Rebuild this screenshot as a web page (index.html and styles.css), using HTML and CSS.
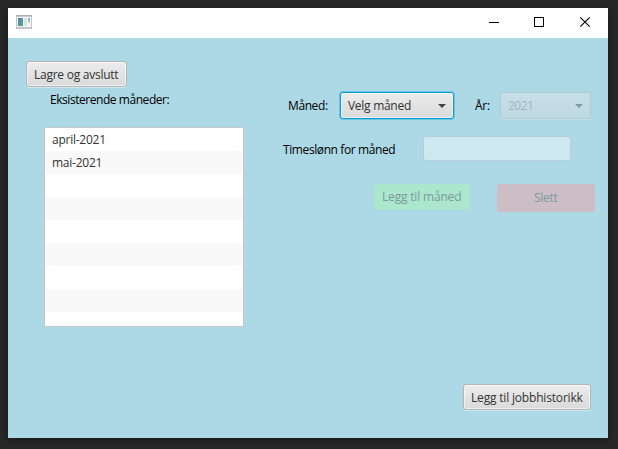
FILE: index.html
```html
<!DOCTYPE html>
<html lang="no">
<head>
<meta charset="utf-8">
<title>Måneder</title>
<link rel="stylesheet" href="styles.css">
</head>
<body>
<div class="window">
  <header class="titlebar">
    <svg class="app-icon" width="16" height="14" viewBox="0 0 16 14" shape-rendering="crispEdges">
      <defs><linearGradient id="g" x1="0" y1="0" x2="1" y2="1"><stop offset="0" stop-color="#4f83b5"/><stop offset="1" stop-color="#4fae78"/></linearGradient></defs>
      <rect width="16" height="14" fill="#c3c7ca"/>
      <rect width="16" height="1" fill="#a9b2bb"/>
      <rect x="1" y="2" width="14" height="10" fill="#f5f6f7"/>
      <rect x="2" y="3" width="5" height="8" fill="url(#g)"/>
      <rect x="8" y="3" width="3" height="8" fill="#e0e0e0"/>
      <rect x="12" y="3" width="2" height="3" fill="#8eb6d9"/>
      <rect x="12" y="6" width="2" height="2" fill="#b9e0ba"/>
    </svg>
    <svg class="controls" width="138" height="30" viewBox="0 0 138 30" fill="none" stroke="#000">
      <path d="M19 14.500h10M64.500 9.500h9v9h-9z" shape-rendering="crispEdges"/>
      <path d="M110.300 9.300l9.400 9.400M119.700 9.300l-9.400 9.400" stroke-width="1.100"/>
    </svg>
  </header>
  <main class="pane">
    <section class="existing">
      <button class="btn save"><span class="t-save">Lagre og avslutt</span></button>
      <div class="list-label"><span class="t-list">Eksisterende måneder:</span></div>
      <ul class="list">
        <li><span class="t-april">april-2021</span></li>
        <li><span class="t-mai">mai-2021</span></li>
        <li></li><li></li><li></li><li></li><li></li><li></li><li></li>
      </ul>
    </section>
    <section class="form">
      <div class="row period">
        <label class="month-label"><span class="t-month">Måned:</span></label>
        <div class="combo focused"><span class="t-choose">Velg måned</span><i class="arrow"></i></div>
        <label class="year-label"><span class="t-year">År:</span></label>
        <div class="combo disabled"><span class="t-2021">2021</span><i class="arrow"></i></div>
      </div>
      <div class="row wage">
        <label class="wage-label"><span class="t-wage">Timeslønn for måned</span></label>
        <div class="field"></div>
      </div>
      <div class="row actions">
        <button class="flat add" disabled><span class="t-add">Legg til måned</span></button>
        <button class="flat delete" disabled><span class="t-delete">Slett</span></button>
      </div>
      <button class="btn history"><span class="t-history">Legg til jobbhistorikk</span></button>
    </section>
  </main>
</div>
</body>
</html>
```
FILE: styles.css
```css
* { box-sizing: border-box; }
body {
  margin: 0;
  height: 449px;
  padding: 8px 10px 11px 8px;
  overflow: hidden;
  background: #282828;
  font: 12px/16px "Open Sans", "Noto Sans", sans-serif;
  color: #000;
}
.window { height: 430px; background: #add8e6; box-shadow: 0 2px 8px rgba(0,0,0,.4); }
.titlebar {
  display: flex;
  justify-content: space-between;
  height: 30px;
  padding-left: 8px;
  background: #fff;
}
.app-icon { margin-top: 7px; }
.pane { display: flex; height: 400px; }
.existing { width: 257px; padding: 23px 0 0 18px; }
.form { display: flex; flex-direction: column; flex: 1; padding-top: 54px; }
.row { display: flex; }
span { display: inline-block; white-space: nowrap; }

button { font: inherit; padding: 0; display: flex; align-items: center; }
.btn {
  height: 26px;
  padding: 1px 0 0 7px;
  border: 1px solid #b5b5b5;
  border-radius: 3px;
  background: linear-gradient(#ececec, #dadada);
  box-shadow: inset 0 0 0 1px rgba(255,255,255,.55), 0 1px 0 rgba(255,255,255,.4);
  color: #333;
}
.save { width: 101px; }
.list-label { height: 16px; margin: 5px 0 0 24px; }
.list {
  width: 200px;
  height: 200px;
  margin: 19px 0 0 18px;
  padding: 0;
  border: 1px solid #c4c8ca;
  background: #fff;
  overflow: hidden;
  list-style: none;
  color: #333;
}
.list li { height: 23px; padding: 4px 7px; }
.list li:nth-child(even) { background: #f9f9f9; }

.period { height: 27px; padding-left: 23px; }
.month-label { width: 52px; padding-top: 6px; }
.year-label { width: 46px; padding: 6px 0 0 21px; }
.combo {
  display: flex;
  align-items: center;
  justify-content: space-between;
  height: 27px;
  padding: 0 7px;
  border: 1px solid #b5b5b5;
  border-radius: 3px;
  background: linear-gradient(#ececec, #dadada);
  color: #333;
}
.focused {
  width: 114px;
  border-color: #039ed3;
  box-shadow: 0 0 0 1px rgba(3,158,211,.35), inset 0 0 0 1px rgba(255,255,255,.6);
}
.disabled { width: 91px; opacity: .4; box-shadow: 0 1px 0 rgba(255,255,255,.6); }
.disabled span { color: #858585; }
.arrow { border: 4px solid transparent; border-top-color: #444; border-bottom: 0; }

.wage { margin-top: 17px; padding-left: 18px; }
.wage-label { width: 140px; padding-top: 6px; }
.field {
  width: 148px;
  height: 25px;
  border: 1px solid #b5ced7;
  border-radius: 3px;
  background: #cee8f0;
}
.actions { margin-top: 23px; padding-left: 109px; align-items: flex-start; }
.flat { border: 0; border-radius: 3px; color: #7c999f; }
.add { width: 96px; height: 26px; padding-left: 8px; background: #abe7cc; }
.delete { width: 98px; height: 28px; margin-left: 27px; padding-left: 37px; background: #cdbec5; }
.history { width: 128px; margin: auto 17px 28px auto; }

.t-save { letter-spacing: -.25px; }
.t-list { letter-spacing: -.45px; }
.t-month, .t-wage { letter-spacing: -.4px; }
.t-choose { letter-spacing: -.28px; }
.t-add, .t-history { letter-spacing: -.18px; }
.t-april, .t-mai { letter-spacing: -.25px; }
.t-year, .t-delete { letter-spacing: -.3px; }
.t-2021 { letter-spacing: -.5px; }
```
